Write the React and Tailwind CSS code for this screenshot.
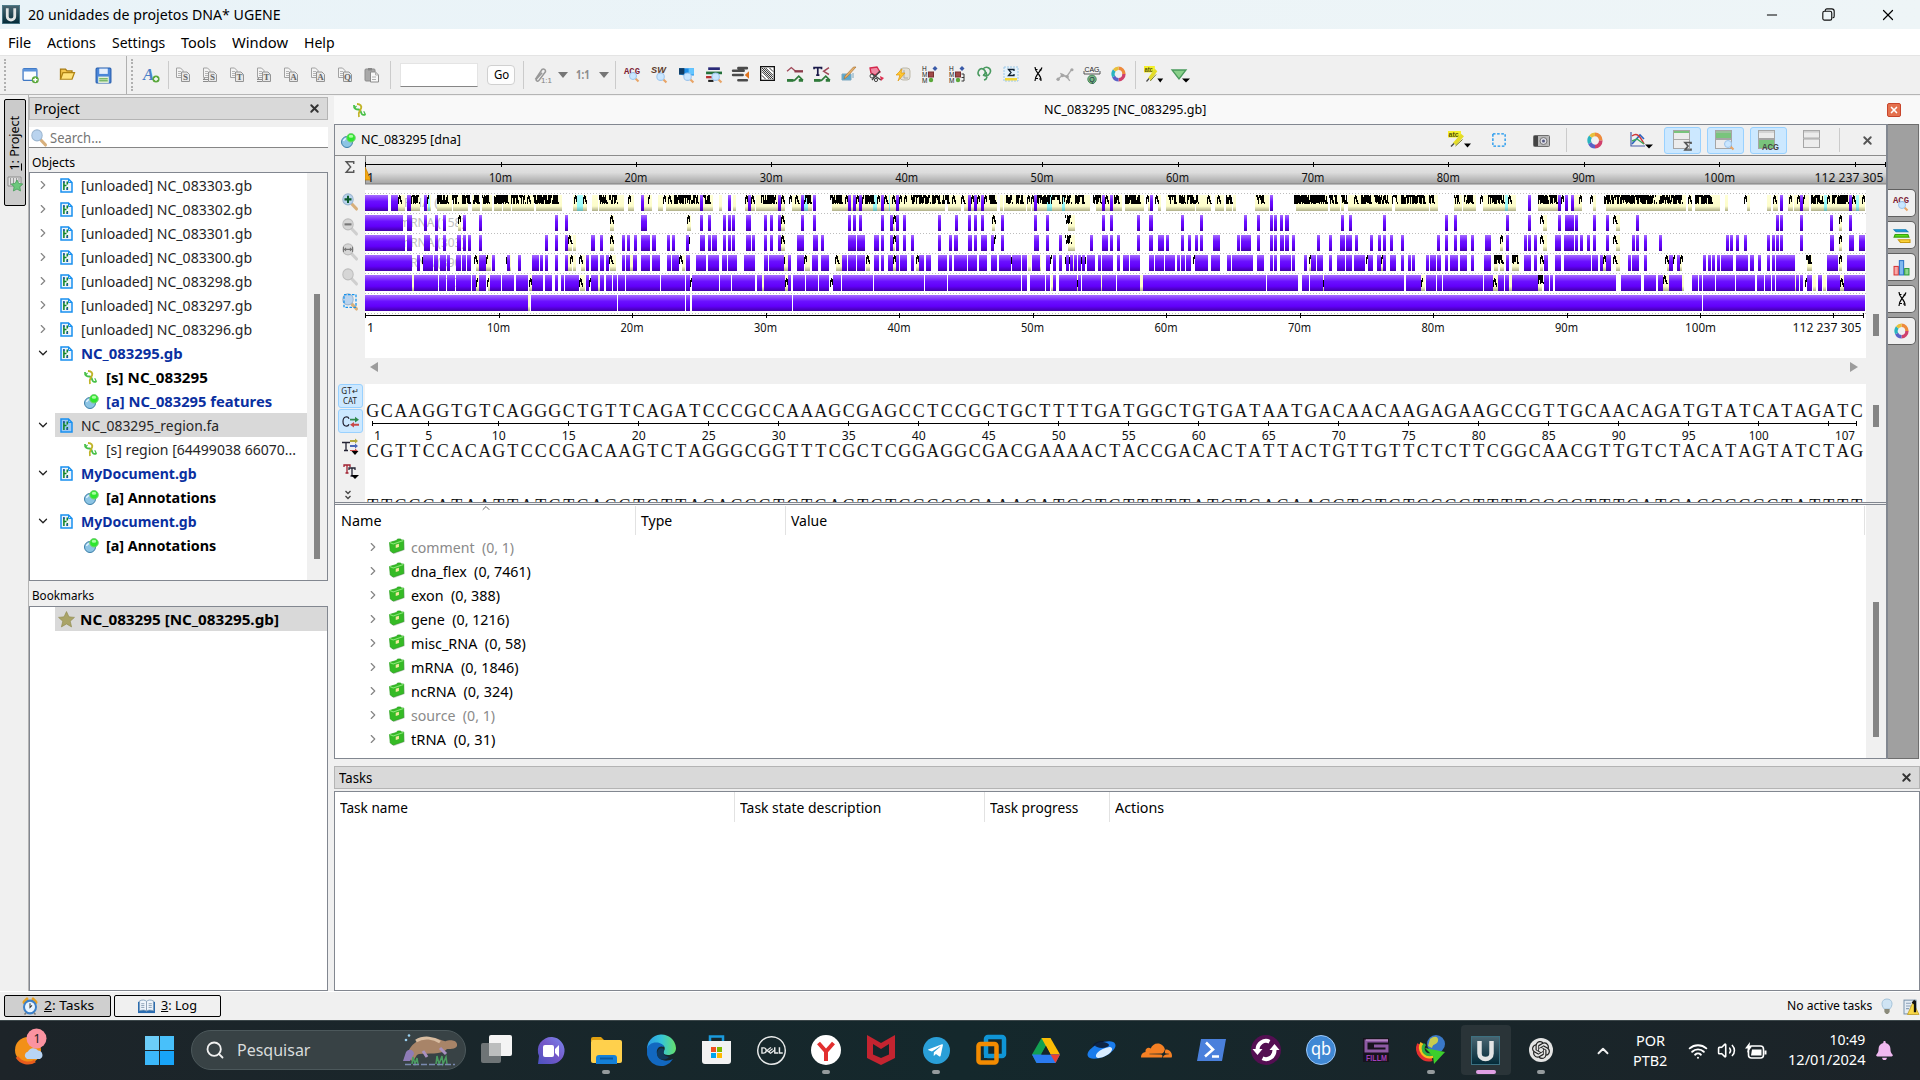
import React, { useLayoutEffect, useRef, useState } from "react";
import { X, Minus, ChevronRight, ChevronDown, ChevronUp, Wifi, Volume2, Search } from "lucide-react";
import { SiOpenai, SiCloudflare, SiDell } from "react-icons/si";
import { FaTelegramPlane, FaBell } from "react-icons/fa";

/* Text squeezed horizontally to a fixed advance width. */
function Fit({ w, className = "", children }) {
  const ref = useRef(null);
  const [s, setS] = useState(1);
  useLayoutEffect(() => {
    if (ref.current) setS(w / ref.current.offsetWidth);
  }, [w]);
  return (
    <span className={"block shrink-0 " + className} style={{ width: w }}>
      <span ref={ref} className="block w-max origin-left whitespace-pre" style={{ transform: `scaleX(${s})` }}>
        {children}
      </span>
    </span>
  );
}

const Svg = ({ w = 16, h = w, vb = "0 0 16 16", children, className = "" }) => (
  <svg width={w} height={h} viewBox={vb} className={"block shrink-0 overflow-visible " + className} fill="none" preserveAspectRatio="none">
    {children}
  </svg>
);

/* ---------- shared icons ---------- */
const Glass = ({ x = 7, y = 8 }) => (
  <g>
    <path d={`M${x + 5.5} ${y + 5.5}l3 3`} stroke="#e8a466" strokeWidth="2" />
    <circle cx={x + 3} cy={y + 3} r="3.500" fill="#c9e6ff" stroke="#9cc4ec" />
  </g>
);
const MagIcon = ({ kind }) => {
  const live = kind === "plus" || kind === "sel" || kind === "search";
  return (
    <Svg w={16} h={17}>
      <path d="M10 10.500l4.500 4.500" stroke={live ? "#d8b07c" : "#cfcfcf"} strokeWidth="3" strokeLinecap="round" />
      <circle cx="6" cy="6" r="5.200" fill={live ? "#b9d3ee" : "#d6d6d6"} stroke={live ? "#9bb5cf" : "#bcbcbc"} />
      {kind === "plus" && <path d="M6 2.500v7M2.500 6h7" stroke="#0b5a2c" strokeWidth="2" />}
      {kind === "minus" && <path d="M2.500 6h7" stroke="#777" strokeWidth="2" />}
      {kind === "range" && <path d="M1.500 3.500v5M10.500 3.500v5M1.500 6h9M4 4.500L2.500 6L4 7.500M8 4.500L9.500 6L8 7.500" stroke="#777" />}
      {kind === "sel" && <rect x="2" y="1.500" width="12" height="12" stroke="#1593ee" strokeWidth="1.300" strokeDasharray="2.500 1.500" />}
    </Svg>
  );
};
const DocIcon = ({ sel }) => (
  <Svg w={13} h={15} vb="0 0 13 15">
    <path d="M1 1h7.500l3.500 3.500V14H1z" fill={sel ? "#9cc8f4" : "#eef4fc"} stroke="#1890f0" strokeWidth="1.500" />
    <path d="M8.500 1v3.500H12" stroke="#1890f0" />
    <path d="M3.900 3.500V12M7.300 3.500v3M7.300 9v3M4 7.500h2.500" stroke="#14852a" strokeWidth="1.600" />
    <path d="M3.900 3v2M7.300 10v2" stroke="#1a50a8" strokeWidth="1.400" />
  </Svg>
);
const DnaIcon = () => (
  <Svg w={13} h={15} vb="0 0 13 15">
    <path d="M1 2c-.5 4 2.500 4.500 4.500 4.500S8 9 8.500 10.500s2.500 2 4 .5" stroke="#48c048" strokeWidth="1.800" />
    <path d="M4 1c3.500 0 5 2 4 4.500S4.500 9.500 6 14" stroke="#c0b428" strokeWidth="1.900" />
    <path d="M12.200 11l-1.500-2.800M1.500 5L3.500 3" stroke="#48c048" strokeWidth="1.200" />
  </Svg>
);
const AnnIcon = () => (
  <Svg w={15} h={15} vb="0 0 15 15">
    <circle cx="6" cy="9" r="5.500" fill="#8cc4e4" stroke="#3c7ea8" />
    <path d="M2.500 8a3.500 3.500 0 0 1 3-2.500" stroke="#e4f4ff" strokeWidth="1.500" />
    <circle cx="10" cy="4.800" r="4.300" fill="#2ee62e" stroke="#7ad07a" />
    <ellipse cx="10" cy="3.200" rx="2.300" ry="1.500" fill="#a8ffa0" />
  </Svg>
);
const Folder = () => (
  <Svg w={16} h={16} vb="0 0 15 16" className="-mt-[2px]">
    <path d="M2.500 6L14 3.500l.8 8.500L5 16 2.500 15z" fill="#9a9a9a" opacity=".45" />
    <path d="M.5 4.500l6.500-2L8 1h3l.5 1L13.800 2v9.500L4 15 1.200 13z" fill="#35bb25" stroke="#27a01c" strokeWidth=".7" />
    <path d="M.8 4.500L4 6l9.500-3.500" stroke="#8ce87a" strokeWidth="1" />
    <path d="M6.300 6.800l3-1v3.200l-3 1z" fill="#f3e9a0" />
  </Svg>
);
const Donut = ({ s = 15 }) => (
  <Svg w={s} h={s + 1}>
    <g strokeWidth="3.600">
      <path d="M8 2.200A5.800 5.800 0 0 1 13.800 8" stroke="#ee8a3c" />
      <path d="M13.800 8A5.800 5.800 0 0 1 8 13.800" stroke="#d0406c" />
      <path d="M8 13.800A5.800 5.800 0 0 1 2.800 10.500" stroke="#5a62c8" />
      <path d="M2.800 10.500A5.800 5.800 0 0 1 3.500 4.400" stroke="#2ab4c0" />
      <path d="M3.500 4.400A5.800 5.800 0 0 1 8 2.200" stroke="#e8c03c" />
    </g>
  </Svg>
);
const Marker = ({ w = 24 }) => (
  <Svg w={w} h={18} vb="0 0 24 18">
    <rect x="0" y="0" width="13" height="6.500" fill="#f4f02a" />
    <text x="0.500" y="5.500" fontSize="7" fontWeight="700" fontFamily="Liberation Sans, sans-serif" fill="#55550a">atc</text>
    <path d="M14.500 4L6.500 13" stroke="#e4dc28" strokeWidth="4" />
    <path d="M14.500 8.500L7.500 15" stroke="#75751a" />
    <path d="M3 15.500l3-3" stroke="#444" strokeWidth="1.500" />
    <path d="M16 12.500h7l-3.500 4z" fill="#000" />
  </Svg>
);
const AcgGlass = () => (
  <Svg w={17} h={17} vb="0 0 17 17">
    <text x="0" y="7.500" textLength="16" lengthAdjust="spacingAndGlyphs" fontSize="9" fontWeight="700" fontFamily="Liberation Mono, monospace" fill="#7d2236">ACG</text>
    <Glass x={6} y={7} />
  </Svg>
);
const Helix = () => (
  <Svg>
    <path d="M5 1c0 3 1 4 3 6.500S11.500 11 11 15M12 1.500C11 4 9.500 5.500 8 7.500S5 11 5 15" stroke="#000" strokeWidth="1.200" />
    <path d="M5.500 3.500h2M9.500 4h2M5.500 12.500h2.500M9 13h2.500" stroke="#000" strokeWidth="1.200" />
  </Svg>
);

/* ---------- toolbar ---------- */
const CopyIcon = ({ t, comp }) => (
  <Svg w={16}>
    <path d="M1.500 1h4l2.500 2.500v7H1.500z" fill="#f4f4f4" stroke="#a2a2a2" />
    <path d="M3 4.500h3M3 6.500h3M3 8.500h3" stroke="#b4b4b4" />
    <path d="M6.500 5h5.500l2.500 2.500V14.500h-8z" fill="#e8e8e8" stroke="#949494" />
    {comp && <path d="M1 12.500h5M1 12.500l2-1.500M1 14.500h5" stroke="#8c8c8c" />}
    <text x="10.500" y="13.300" textAnchor="middle" fontSize="9" fontWeight="700" fontFamily="Liberation Serif, serif" fill="#666">{t}</text>
  </Svg>
);
const Cell = ({ children, w = 27 }) => (
  <div className="flex h-full shrink-0 items-center justify-center" style={{ width: w }}>{children}</div>
);
const Sep = () => <div className="h-7 w-px shrink-0 bg-[#cbcbcb]" />;
const Grip = () => <div className="h-8 shrink-0 border-l-2 border-dotted border-[#b0b0b0]" />;

const toolIcons = [
  <AcgGlass />,
  <Svg w={17} h={17}>
    <text x="0" y="7" textLength="14" lengthAdjust="spacingAndGlyphs" fontSize="9" fontWeight="700" fontStyle="italic" fontFamily="Liberation Sans, sans-serif" fill="#5a3a2a">SW</text>
    <Glass x={6} y={7} />
  </Svg>,
  <Svg w={17} h={17}><path d="M1 2h14v7H6L1 8z" fill="#1c8ee8" /><path d="M1 2h5v6H1z" fill="#103c64" /><path d="M10 2h5v6h-5z" fill="#65c6ff" /><Glass x={6} y={7} /></Svg>,
  <Svg w={17} h={17}><path d="M3 2.500h11" stroke="#2a2a78" strokeWidth="2.500" /><path d="M1 6.500h15" stroke="#23703a" strokeWidth="2.500" /><path d="M1 10.500h6" stroke="#b83030" strokeWidth="2.200" /><path d="M3 14h5" stroke="#222" strokeWidth="2" /><Glass x={7} y={7} /></Svg>,
  <Svg w={17}><path d="M6 2h8M1 4.500h10M1 8.500h9M6 13.500h8" stroke="#4a4a4a" strokeWidth="2.400" strokeLinecap="round" /><path d="M16 5v7l-4-3.500z" fill="#e0731c" /></Svg>,
  <Svg w={15} h={15}><rect x=".7" y=".7" width="14.600" height="14.600" fill="#fff" stroke="#111" strokeWidth="1.400" /><path d="M2 2l12 12M6 2l8 8M2 6l8 8M10 2l4 4M2 10l4 4M4 2l10 10M2 4l10 10" stroke="#222" strokeWidth="1" /></Svg>,
  <Svg w={17}><path d="M1 5l4-3.500L9 5" stroke="#a04858" strokeWidth="1.300" /><path d="M8 5h8" stroke="#8b3a4a" strokeWidth="2.200" /><path d="M1 13.500h7l4-4 4 4" stroke="#2f7a3a" strokeWidth="1.500" /><path d="M1 13.500h6M12 13.500h4" stroke="#2f7a3a" strokeWidth="2.500" /></Svg>,
  <Svg w={17}><path d="M1 3V1.500h7V3M4.500 1.500v7M3 8.500h3" stroke="#1a1a4a" strokeWidth="1.600" /><path d="M15 1.500L10 5l5 3" stroke="#a04858" strokeWidth="1.400" /><path d="M1 13.500h7l4-4 4 4" stroke="#2f7a3a" strokeWidth="1.500" /><path d="M1 13.500h6M12 13.500h4" stroke="#2f7a3a" strokeWidth="2.500" /></Svg>,
  <Svg w={16}><path d="M1 8h9v6H1zM12 7v5" fill="#58a8d0" stroke="#7aa8c0" /><path d="M15 1L6 11l-3 2 1-3L12.500 1z" fill="#e8b068" stroke="#a8763a" strokeWidth=".7" /></Svg>,
  <Svg w={16}><path d="M2 2l7-1 3 5-5 3-4-2z" fill="#f08aa4" stroke="#d4284c" strokeWidth="1.300" /><path d="M4 8l9 6M12 5l-8 9" stroke="#444" strokeWidth="1.300" /><circle cx="4" cy="10" r="2" stroke="#444" /><circle cx="8" cy="14" r="1.600" stroke="#444" /><path d="M12 10l4 2-3 3z" fill="#e03050" /></Svg>,
  <Svg w={16}><rect x="5" y="2" width="10" height="12" rx="3" fill="#e2e0d8" stroke="#bdb9aa" /><path d="M9 4v8h4" stroke="#aaa" /><path d="M7 3L1 9h4l-2 6 7-8H6z" fill="#ffc830" stroke="#e09a10" strokeWidth=".7" /></Svg>,
  ...[0, 1].map((k) => (
    <Svg w={16} h={17} vb="0 0 16 17" key={k}>
      <text fontSize="6.500" fontFamily="Liberation Sans, sans-serif" fill="#222"><tspan x="0" y="5">H</tspan><tspan x="0" y="11">M</tspan><tspan x="0" y="16.500">M</tspan></text>
      <rect x="6.500" y="6" width="5" height="5" fill="#a04a48" stroke="#7a3030" />
      <path d="M13 0l2.500 2.500L13 5l-2.500-2.500z" fill="#3a5aa8" />
      <circle cx="9" cy="14" r="2.200" fill="#5aa83a" />
      {k === 1 && <path d="M12.500 8h2.500v7h-2.500M12.500 11.500h2.500" stroke="#333" />}
    </Svg>
  )),
  <Svg w={16}><path d="M4 10C0 8 3 1 7 3s2 6 0 6M7 3c4-4 9 0 7 4s-6 3-7 2M8 14c4-1 3-4 2-8" stroke="#4a9a60" strokeWidth="1.600" /></Svg>,
  <Svg w={16}><rect x="1" y="1" width="14" height="14" fill="#e4f2fb" stroke="#9cc8e8" strokeDasharray="2 1" /><rect x="2" y="12" width="12" height="2.500" fill="#f4d838" /><path d="M11 5V3.500H5.500L8 6.500 5.500 9.500H11V8" stroke="#123" strokeWidth="1.300" /></Svg>,
  <Helix />,
  <Svg w={17}><path d="M1 13l5-4 4 1 5-7M4 7l6 3 3 4" stroke="#ababab" strokeWidth="1.300" /><circle cx="2" cy="12.500" r="1.600" fill="#a5a5a5" /><circle cx="6" cy="9" r="1.600" fill="#a5a5a5" /><circle cx="10.500" cy="10" r="1.600" fill="#a5a5a5" /><circle cx="15" cy="3.500" r="1.500" fill="#a5a5a5" /></Svg>,
  <Svg w={18} h={18} vb="0 0 18 18"><text x="1.500" y="5.800" textLength="15" lengthAdjust="spacingAndGlyphs" fontSize="7" fontFamily="Liberation Sans, sans-serif" fill="#222">CAG</text><path d="M1 5v3h16V5" stroke="#555" /><circle cx="9" cy="13.300" r="4.200" fill="#7ab68a" stroke="#4a8a5c" /><text x="9" y="16" textAnchor="middle" fontSize="7" fontFamily="Liberation Sans, sans-serif" fill="#123">Q</text></Svg>,
  <Donut s={15} />,
];

function Toolbar() {
  return (
    <div className="flex h-10 shrink-0 items-center border-t border-b border-t-[#e4e4e4] border-b-[#b5b5b5] bg-[#f0f0f0]">
      <div className="ml-1 flex items-center"><Grip /></div>
      <div className="ml-[6px] flex">
        <Cell w={36}><Svg w={17}><rect x="1" y="1.500" width="13" height="11" rx="1" fill="#fbfdff" stroke="#3f78c4" strokeWidth="1.200" /><path d="M1 3h13" stroke="#5c94dc" strokeWidth="2.500" /><circle cx="12.500" cy="12" r="3.300" fill="#5aa83c" /><path d="M12.500 10v4M10.500 12h4" stroke="#fff" strokeWidth="1.300" /></Svg></Cell>
        <Cell w={37}><Svg w={16} h={14}><path d="M1.500 14V2.500h5l1.500 2h5V7" fill="#f4c64c" stroke="#a87a10" strokeWidth="1.300" /><path d="M1.500 14L4 6.500h11.500L13 14z" fill="#ffe27a" stroke="#b08414" strokeWidth="1.300" /></Svg></Cell>
        <Cell w={37}><Svg w={17}><rect x="1" y="1" width="14" height="14" rx="1" fill="#4a86d8" stroke="#245cac" /><rect x="4" y="1.500" width="8" height="5" fill="#e4eefc" /><rect x="3" y="9" width="10" height="6" fill="#e4f0d8" /><path d="M4 11h8M4 13h8" stroke="#7ab86a" strokeWidth="1.300" /></Svg></Cell>
      </div>
      <div className="ml-[4px] h-full w-px bg-[#b0b0b0]" />
      <div className="ml-1 flex"><Grip /></div>
      <div className="ml-[3px] flex">
        <Cell w={32}><Svg w={16}><text x="-1" y="13" fontSize="17" fontStyle="italic" fontWeight="700" fontFamily="Liberation Serif, serif" fill="#4a80c8">A</text><circle cx="12" cy="12" r="3.600" fill="#5aa83c" /><path d="M12 10v4M10 12h4" stroke="#fff" strokeWidth="1.300" /></Svg></Cell>
      </div>
      <Sep />
      <div className="flex">
        {["S", "S", "T", "T", "A", "A", "Q"].map((t, i) => <Cell key={i}><CopyIcon t={t} comp={i === 1 || i === 3} /></Cell>)}
        <Cell><Svg w={16}><rect x="1" y="2" width="10" height="12" rx="1" fill="#a8a8a8" stroke="#8c8c8c" /><rect x="4" y="1" width="4" height="2.500" fill="#888" /><path d="M6.500 5h5l3 3v7h-8z" fill="#f8f8f8" stroke="#8c8c8c" /><path d="M11.500 5v3h3M8 10h4M8 12.500h4" stroke="#b0b0b0" /></Svg></Cell>
      </div>
      <div className="ml-[5px]"><Sep /></div>
      <div className="ml-[9px] h-[24px] w-[78px] border border-[#e4e4e4] border-b-[#868686] bg-white" />
      <div className="ml-[9px] flex h-[20px] w-[28px] items-center justify-center rounded border border-[#d0d0d0] bg-[#fdfdfd] text-[13px]"><Fit w={15}>Go</Fit></div>
      <div className="ml-[8px]"><Sep /></div>
      <div className="ml-[8px] flex items-center">
        <Svg w={18}><path d="M3 12L9 3a2 2 0 0 1 3 2L6 13a1.200 1.200 0 0 1-2-1.500L9 6" stroke="#989898" strokeWidth="1.400" /><text x="8" y="15.500" fontSize="7" fontFamily="Liberation Sans, sans-serif" fill="#808080">1:1</text></Svg>
      </div>
      <div className="ml-[8px] border-x-[5px] border-t-[6px] border-x-transparent border-t-[#767676]" />
      <div className="ml-[8px] text-[13px] font-bold text-[#8c8c8c]"><Fit w={14}>1:1</Fit></div>
      <div className="ml-[9px] border-x-[5px] border-t-[6px] border-x-transparent border-t-[#767676]" />
      <div className="ml-[6px]"><Sep /></div>
      <div className="ml-[3px] flex">{toolIcons.map((ic, i) => <Cell key={i}>{ic}</Cell>)}</div>
      <div className="ml-[3px]"><Sep /></div>
      <div className="ml-[8px] flex items-center gap-[7px]">
        <Marker w={20} />
        <Svg w={19} h={15} vb="0 0 19 15"><path d="M1 2h14l-7 9z" fill="#8ad08a" stroke="#4a9a5c" strokeWidth="1.300" /><path d="M11 10.500h8l-4 4z" fill="#000" /></Svg>
      </div>
    </div>
  );
}

/* ---------- project dock ---------- */
const tree = [
  ...["303", "302", "301", "300", "298", "297", "296"].map((n) => ({ k: "doc", c: false, t: `[unloaded] NC_083${n}.gb`, w: 171 })),
  { k: "doc", c: true, t: "NC_083295.gb", w: 102, b: true, blue: true },
  { k: "dna", t: "[s] NC_083295", w: 102, b: true },
  { k: "ann", t: "[a] NC_083295 features", w: 166, b: true, blue: true },
  { k: "doc", c: true, t: "NC_083295_region.fa", w: 138, sel: true },
  { k: "dna", t: "[s] region [64499038 66070...", w: 190 },
  { k: "doc", c: true, t: "MyDocument.gb", w: 116, b: true, blue: true },
  { k: "ann", t: "[a] Annotations", w: 110, b: true },
  { k: "doc", c: true, t: "MyDocument.gb", w: 116, b: true, blue: true },
  { k: "ann", t: "[a] Annotations", w: 110, b: true },
];

function DockTitle({ t, w }) {
  return (
    <div className="flex h-[23px] items-center justify-between border border-[#b4b4b4] bg-[#d9d9d9] pl-1 pr-[6px] text-[14px]">
      <Fit w={w}>{t}</Fit>
      <X size={13} strokeWidth={3.500} color="#333" />
    </div>
  );
}

function Project() {
  return (
    <div className="flex w-[300px] shrink-0 flex-col border-l border-[#b4b4b4]">
      <div className="mt-[2px]"><DockTitle t="Project" w={46} /></div>
      <div className="mt-[7px] flex h-[21px] items-center border-b border-[#868686] bg-white pl-[2px] text-[14px] text-[#757575]">
        <MagIcon kind="search" /><Fit w={52} className="ml-[3px]">Search...</Fit>
      </div>
      <div className="mt-[5px] flex h-[19px] items-center pl-[3px] text-[13px]"><Fit w={43}>Objects</Fit></div>
      <div className="flex h-[409px] border border-[#828790] bg-white">
        <div className="flex-1">
          {tree.map((r, i) => (
            <div key={i} className="flex h-[24px] items-center text-[15px]">
              <div className="flex w-[25px] justify-center">
                {r.c === true && <ChevronDown size={14} strokeWidth={2.200} color="#222" />}
                {r.c === false && <ChevronRight size={14} strokeWidth={2} color="#858585" />}
              </div>
              <div className={"flex h-full w-[252px] items-center " + (r.k === "doc" ? "pl-[5px] " : "pl-[29px] ") + (r.sel ? "bg-[#d9d9d9]" : "")}>
                <div className={r.k === "doc" ? "w-[21px]" : "w-[22px]"}>
                  {r.k === "doc" ? <DocIcon sel={r.sel} /> : r.k === "dna" ? <DnaIcon /> : <AnnIcon />}
                </div>
                <Fit w={r.w} className={(r.b ? "font-bold " : "") + (r.blue ? "text-[#0a2fa0]" : r.b ? "text-black" : "text-[#262626]")}>{r.t}</Fit>
              </div>
            </div>
          ))}
        </div>
        <div className="flex w-5 justify-center bg-[#f0f0f0] pt-[121px]"><div className="h-[265px] w-[6px] bg-[#858585]" /></div>
      </div>
      <div className="mt-[5px] flex h-[20px] items-center pl-[3px] text-[13px]"><Fit w={62}>Bookmarks</Fit></div>
      <div className="flex-1 border border-[#828790] bg-white pl-[25px]">
        <div className="flex h-[24px] items-center bg-[#d9d9d9] pl-[3px] text-[15px] font-bold">
          <Svg w={17}><path d="M8 .5l2.300 5 5.200.5-4 3.600 1.300 5.400L8 12.200 3.200 15l1.300-5.400-4-3.600 5.200-.5z" fill="#aaa468" stroke="#8f8a50" strokeWidth=".6" /></Svg>
          <Fit w={199} className="ml-[5px]">NC_083295 [NC_083295.gb]</Fit>
        </div>
      </div>
    </div>
  );
}

/* ---------- annotation overview ---------- */
/* Tiles hold feature spans on their own horizontal scale; o is the origin and s the scale. */
const tiles = [
  { o: 330, s: 2.9037, rows: [
    { p: "102-168 177-197 224-235 273-282 903-912 1074-1083 1156-1164 1214-1222 1301-1310 1368-1376 1402-1411 1504-1513 1519-1527 1537-1546",
      c: "197-218 235-262 282-293 311-354 357-401 412-436 441-470 476-499 502-527 529-580 582-592 597-674 706-746 761-778 781-854 865-883 912-935 952-967 975-1111 1130-1138 1170-1179 1205-1235 1237-1321 1342-1400 1458-1504 1513-1568",
      y: "284-290 717-735 1376-1388",
      k: "197-210 235-262 282-288 311-345 354-376 382-410 415-437 441-465 476-520 527-568 573-585 588-665 709-718 735-747 781-807 811-837 865-874 923-928 967-977 982-992 998-1072 1084-1105 1205-1214 1222-1235 1252-1298 1310-1321 1334-1342 1349-1364 1376-1400 1452-1490 1495-1504 1527-1537 1546-1568" },
    { p: "102-212 224-238 273-282 305-314 328-337 386-395 433-441 653-662 682-691 903-920 1074-1083 1098-1106 1141-1150 1156-1164 1167-1176 1208-1222 1260-1269 1278-1286 1301-1310 1368-1376 1402-1411 1504-1513 1519-1527 1537-1546",
      c: "372-381 813-825 1037-1048 1310-1321", k: "372-381 813-825 1037-1046 1310-1321" },
    { p: "102-218 224-238 273-290 305-314 328-337 369-380 386-395 401-409 433-441 624-633 653-662 682-691 758-769 784-793 848-857 862-871 883-891 903-929 935-947 979-987 993-1002 1034-1041 1074-1089 1098-1106 1109-1124 1141-1150 1156-1164 1167-1176 1208-1222 1225-1234 1260-1269 1278-1286 1301-1310 1356-1376 1402-1417 1426-1434 1504-1527 1530-1553",
      c: "691-703 706-714 813-825 1310-1321", k: "692-707 813-825 1041-1046 1310-1321" },
    { p: "102-238 253-261 270-299 302-314 319-337 340-348 366-381 384-395 398-409 433-454 470-479 514-523 546-554 587-607 610-619 624-633 653-662 682-691 743-752 758-778 784-796 801-810 848-857 859-871 880-891 903-929 935-958 979-990 993-1014 1034-1045 1063-1092 1098-1130 1138-1153 1156-1182 1202-1234 1260-1272 1274-1318 1330-1339 1356-1376 1400-1417 1426-1449 1487-1501 1504-1527 1530-1553",
      c: "424-433 454-467 523-527 691-703 706-714 729-740 813-830 871-880 1022-1031 1318-1330 1380-1394 1470-1487 1556-1568", k: "266-270 418-429 453-458 512-515 697-707 723-734 810-825 1014-1024 1318-1322 1376-1386 1467-1482 1556-1568" },
    { p: "102-238 244-314 317-337 340-363 366-409 412-424 433-453 464-497 499-534 540-575 587-618 624-644 653-662 671-679 682-723 743-752 758-778 784-796 801-819 822-833 836-857 859-958 961-1031 1034-1045 1051-1130 1132-1164 1167-1234 1240-1254 1260-1321 1330-1339 1344-1380 1382-1417 1420-1449 1461-1484 1487-1568",
      c: "238-244 424-433 458-464 578-587 725-740 778-784 1254-1260 1321-1330", k: "424-430 455-461 577-587 724-735 753-758 1045-1050 1321-1330 1452-1461" },
    { p: "102-575 584-833 836-1031 1034-1045 1051-1342 1344-1568", c: "575-582" } ] },
  { o: 860, s: 2.9037, rows: [
    { p: "0-6 61-70 105-113 314-322 331-340 351-360 505-514 703-711 726-735 842-851 1191-1199",
      c: "6-247 256-293 302-398 407-415 418-482 485-497 499-668 685-760 769-825 836-842 865-874 889-973 976-1019 1031-1057 1063-1080 1083-1092 1147-1188 1266-1359 1365-1394 1397-1405 1417-1545 1553-1568",
      y: "38-49 84-87 543-558 587-595",
      k: "6-12 15-44 49-58 70-84 93-105 113-122 128-137 148-207 209-236 239-262 267-280 293-308 322-331 340-348 360-369 375-398 424-444 453-476 485-493 497-505 514-583 587-615 624-653 677-703 711-724 737-755 769-817 830-840 857-867 894-921 926-947 950-983 1008-1022 1037-1048 1063-1083 1150-1176 1260-1359 1362-1388 1397-1417 1434-1450 1455-1488 1492-1537 1545-1565" },
    { p: "0-6 61-70 87-96 105-113 125-134 226-235 276-285 314-322 331-340 351-360 409-418 505-514 540-549 703-711 726-735 804-813 839-851 932-941 987-996 1115-1124 1153-1161 1191-1199 1202-1211 1220-1228 1234-1246 1397-1405 1420-1429 1519-1527",
      c: "96-102 383-392 604-624", k: "96-104 383-394 595-615" },
    { p: "0-15 41-55 61-70 87-96 105-113 125-134 148-157 226-235 258-267 273-285 314-325 331-340 351-369 380-389 409-418 505-520 540-549 578-587 668-677 703-720 726-735 746-755 804-813 839-851 865-883 889-897 932-941 952-961 973-981 987-996 1025-1045 1095-1103 1106-1135 1153-1161 1191-1199 1202-1211 1220-1231 1234-1246 1254-1263 1327-1336 1362-1371 1394-1408 1411-1429 1437-1446 1481-1490 1504-1513 1519-1527 1539-1548",
      c: "96-102 604-624", k: "96-104 388-394 595-615" },
    { p: "0-15 41-55 61-70 81-96 105-113 116-136 148-157 171-186 192-206 226-253 258-267 273-311 314-340 346-369 380-398 404-438 441-467 470-485 499-523 540-552 560-569 578-587 598-607 610-618 621-630 633-642 645-653 659-682 691-700 703-735 746-755 764-781 784-813 839-854 857-883 886-915 920-929 932-944 947-961 973-1010 1019-1045 1066-1077 1080-1141 1153-1173 1191-1199 1202-1211 1220-1251 1254-1263 1289-1298 1310-1324 1327-1344 1362-1371 1385-1408 1411-1429 1434-1466 1475-1490 1501-1513 1519-1527 1539-1556",
      c: "17-29 96-105 163-171 487-497 523-526 618-621 1304-1310 1513-1519", k: "17-29 96-104 163-171 438-441 552-557 595-598 607-610 642-645 653-655 967-973 1304-1310 1469-1475 1513-1519" },
    { p: "0-38 41-186 189-253 256-467 470-485 494-537 540-552 560-569 578-630 633-642 645-700 703-743 746-813 822-1179 1182-1272 1283-1304 1307-1344 1347-1568",
      c: "555-560 630-633 700-703 813-822 1344-1347", k: "630-633 1344-1347" },
    { p: "0-1568" } ] },
  { o: 1390, s: 2.9585, rows: [
    { p: "408-417 497-506 518-527 535-544 1154-1163 1213-1222 1358-1367",
      c: "0-5 15-115 118-142 189-213 216-254 275-372 438-497 544-568 601-609 639-875 881-893 902-976 991-1000 1057-1065 1115-1127 1133-1148 1177-1192 1195-1240 1246-1405",
      y: "340-349 1284-1293 1379-1388",
      k: "5-25 32-107 115-133 189-206 219-249 266-275 290-340 349-361 438-497 506-515 558-568 592-602 633-790 795-868 882-892 902-956 1047-1057 1133-1145 1180-1189 1204-1213 1222-1227 1246-1284 1293-1303 1308-1358 1367-1380 1395-1405" },
    { p: "163-172 189-198 343-352 408-417 497-506 518-544 547-556 601-609 639-648 728-737 1142-1151 1154-1163 1213-1222 1302-1311 1358-1367", c: "453-464 669-680 1328-1337", k: "444-457 660-674 1328-1337" },
    { p: "0-9 33-41 139-148 163-172 189-198 207-228 240-249 281-299 343-352 396-405 408-417 426-435 488-506 515-544 547-556 562-571 583-592 601-609 639-648 716-725 728-737 751-760 796-805 994-1003 1006-1015 1024-1033 1047-1056 1115-1124 1130-1139 1142-1151 1154-1163 1213-1222 1302-1314 1358-1373 1388-1405",
      c: "325-334 453-464 669-680 1328-1337", k: "325-334 444-457 660-674 1328-1337" },
    { p: "0-18 33-41 53-62 65-74 107-115 118-136 139-151 163-172 177-201 207-228 240-249 278-299 343-352 396-417 426-435 456-467 488-506 515-595 598-615 621-630 639-654 704-713 716-737 751-760 825-837 849-858 926-935 941-950 953-962 967-976 979-1015 1024-1059 1065-1077 1089-1098 1115-1124 1130-1139 1142-1197 1293-1325 1352-1405",
      c: "308-320 325-337 361-381 444-453 630-639 669-680 820-825 849-863 1234-1248 1328-1337", k: "308-336 361-381 444-456 630-639 660-674 814-825 837-843 858-866 1231-1248 1328-1337" },
    { p: "0-41 47-92 107-136 139-154 157-275 278-305 320-337 340-352 361-438 456-470 473-482 488-669 683-743 751-787 793-808 825-864 893-911 914-923 926-962 964-1021 1024-1080 1086-1106 1109-1127 1130-1139 1142-1198 1201-1210 1213-1222 1234-1248 1266-1278 1293-1331 1343-1405",
      c: "92-104 305-320 352-361 438-450 808-825 864-870 1198-1201 1251-1260 1281-1290 1331-1343", k: "92-97 305-318 438-456 808-822 1229-1234 1331-1343" },
    { p: "0-923 926-1405" } ] },
];

const spans = (str, t) => (str ? str.split(" ").map((q) => q.split("-").map((v) => Math.round(+v / t.s + t.o) - 365)) : []);

/* Dense arrow heads: a dark band whose edges are broken by slivers; narrow ones show a single head. */
function Teeth({ a, b, y }) {
  let d = "";
  const n = b - a;
  for (let x = a; x < b; x++) {
    const f = Math.sin(x * 12.9898) * 43758.5453;
    const r = Math.floor((f - Math.floor(f)) * 16);
    let top = [0, 0, 0, 0, 1, 0, 2, 0, 0, 0, 0, 5, 0, 0, 0, 0][r];
    let bot = [9, 8, 9, 7, 9, 5, 9, 9, 2, 9, 8, 9, 8, 9, 3, 9][r];
    if (n < 6) {
      const k = x - a;
      top = [2, 0, 1, 5, 8][k];
      bot = [9, 4, 7, 9, 9][k];
    } else if (x === b - 1) {
      top = 7;
      bot = 9;
    }
    if (bot > top) d += `M${x} ${y + top}h1v${bot - top}h-1z`;
  }
  return <path d={d} fill="#000" />;
}

const marks = ["10m", "20m", "30m", "40m", "50m", "60m", "70m", "80m", "90m", "100m"];
function Marks({ first, step, last, end, y, ty }) {
  return (
    <g fontFamily="Noto Sans, sans-serif" fontSize="12.500" fill="#111">
      <path d={`M.5 ${y - 2.5}v5M${end} ${y - 2.5}v5M0 ${y}H${end}M${last} ${y - 2.5}v5` + marks.map((m, i) => `M${Math.round(first + i * step) + 0.5} ${y - 2.5}v5`).join("")} stroke="#000" strokeWidth="1" shapeRendering="crispEdges" />
      <text x="2" y={ty}>1</text>
      {marks.map((m, i) => (
        <text key={m} x={first + i * step - (i === 9 ? 15 : 11.5)} y={ty} textLength={i === 9 ? 31 : 23} lengthAdjust="spacingAndGlyphs">{m}</text>
      ))}
      <text x={end - 71} y={ty} textLength="69" lengthAdjust="spacingAndGlyphs">112 237 305</text>
    </g>
  );
}

function Overview() {
  return (
    <svg width="1501" height="168" className="block bg-white" shapeRendering="crispEdges">
      <defs>
        <linearGradient id="pu" x2="0" y2="1"><stop offset="0" stopColor="#a66cff" /><stop offset=".4" stopColor="#6a10ff" /><stop offset=".7" stopColor="#6200fa" /><stop offset="1" stopColor="#4200a8" /></linearGradient>
        <linearGradient id="cr" x2="0" y2="1"><stop offset="0" stopColor="#ffffd6" /><stop offset=".7" stopColor="#fdfdca" /><stop offset="1" stopColor="#aeae88" /></linearGradient>
        <linearGradient id="cy" x2="0" y2="1"><stop offset="0" stopColor="#b0ffff" /><stop offset=".7" stopColor="#96fafa" /><stop offset="1" stopColor="#68b4b4" /></linearGradient>
      </defs>
      <g fontFamily="Noto Sans, sans-serif" fontSize="13" fill="#c0c0c0">
        {["tRNA (218)", "mRNA (158)", "mRNA (303)", "mRNA (390)", "mRNA (77)"].map((t, i) => <text key={t} x="34" y={17 + i * 20} textLength="66" lengthAdjust="spacingAndGlyphs">{t}</text>)}
      </g>
      {[0, 1, 2, 3, 4, 5, 6].map((i) => <path key={i} d={`M0 ${3.5 + 20 * i}H1501`} stroke="#bdbdbd" strokeDasharray="1 2" />)}
      {tiles.map((t) => t.rows.map((r, i) => {
        const y = 5 + 20 * i;
        const box = (s, f) => spans(s, t).map(([a, b]) => <rect key={f + a} x={a} y={y} width={Math.max(1, b - a)} height="16" fill={f} />);
        return (
          <g key={t.o + "-" + i}>
            {box(r.c, "url(#cr)")}{box(r.y, "url(#cy)")}
            {spans(r.k, t).map(([a, b]) => <Teeth key={a} a={a} b={Math.max(b, a + 1)} y={y + (i === 4 && b - a < 5 ? 3 : 0)} />)}
            {box(r.p, "url(#pu)")}
          </g>
        );
      }))}
      <Marks first={133.500} step={133.500} last={1468.500} end={1498.500} y={125.500} ty={142} />
    </svg>
  );
}

/* ---------- nucleotide rows ---------- */
const seq = "GCAAGGTGTCAGGGCTGTTCAGATCCCGCCAAAGCGAGCCTCCGCTGCTTTTGATGGCTGTGATAATGACAACAAGAGAAGCCGTTGCAACAGATGTATCATAGATC";
const comp = seq.split("").map((c) => ({ A: "T", T: "A", G: "C", C: "G" })[c]).join("");
const next = "TTGGGATAATTATGTGAGGTGTTAGAGGGTGTGAGTGTGGGGGGAAAGATGGTGTTTTTATGTGAGAAGGTGTGTGGGGTTTTGGGGTTTGATGAGGGGGGTATTTT";
const xs = seq.split("").map((_, i) => 7.8 + 14 * i).join(" ");
function Sequence() {
  const n = Array.from({ length: 20 }, (_, i) => (i + 1) * 5);
  return (
    <svg width="1501" height="118" className="block bg-white">
      <g fontFamily="Liberation Serif, serif" fontSize="18" textAnchor="middle" fill="#161616">
        <text x={xs} y="33">{seq}</text>
        <text x={xs} y="73">{comp}</text>
        <text x={xs} y="127.500">{next}</text>
      </g>
      <path shapeRendering="crispEdges" d={"M7 39.500H1492M7.500 37v5M1491.500 37v5" + [...n, 105].map((i) => `M${Math.round(-6.6 + 14 * i)}.5 37v5`).join("")} stroke="#000" />
      <g fontFamily="Noto Sans, sans-serif" fontSize="12.500" textAnchor="middle" fill="#111">
        <text x="12.500" y="55.500">1</text>
        {n.map((i) => <text key={i} x={-6.3 + 14 * i} y="55.500" textLength={i < 10 ? 7 : i < 100 ? 14 : 20} lengthAdjust="spacingAndGlyphs">{i}</text>)}
        <text x="1480" y="55.500" textLength="20" lengthAdjust="spacingAndGlyphs">107</text>
      </g>
    </svg>
  );
}

const PanelIcon = ({ a, b }) => (
  <g>
    <rect x="0.500" y="0.500" width="16" height="8" fill={a ? "#79c47c" : "#ececec"} stroke="#a5a5a5" />
    <path d="M1 2h15" stroke="#bcbcbc" />
    <rect x="0.500" y="9.500" width="16" height="9" fill={b ? "#79c47c" : "#ececec"} stroke="#a5a5a5" />
  </g>
);
const Toggle = ({ children }) => (
  <div className="flex h-[27px] w-[37px] items-center justify-center rounded-[3px] border border-[#99d1ff] bg-[#cce8ff]">{children}</div>
);

function SeqHeader() {
  return (
    <div className="flex h-[31px] items-center border-b border-[#8c8c8c] pl-[6px] text-[13px]">
      <AnnIcon /><Fit w={100} className="ml-[5px]">NC_083295 [dna]</Fit>
      <div className="ml-[987px] flex items-center">
        <Marker />
        <Svg w={14} className="ml-[20px]"><rect x="1" y="1" width="14" height="14" stroke="#1593ee" strokeWidth="1.500" strokeDasharray="3 1.800" /></Svg>
        <Svg w={17} h={13} vb="0 0 17 13" className="ml-[27px]"><rect x=".5" y="1.500" width="16" height="11" rx="1" fill="#b8b8b8" stroke="#6e6e6e" /><rect x="1" y="2" width="4" height="10" fill="#444" /><circle cx="10.500" cy="7" r="3.500" fill="#dcdce4" stroke="#777" /><circle cx="10.500" cy="7" r="1.500" fill="#555a80" /></Svg>
        <div className="ml-[16px] h-[24px] w-px bg-[#cbcbcb]" />
        <div className="ml-[20px]"><Donut s={16} /></div>
        <Svg w={23} h={17} vb="0 0 23 17" className="ml-[27px]"><path d="M1 0v14h14" stroke="#4a5ea8" strokeWidth="1.200" /><path d="M2 12L10 3l4 4" stroke="#2a62c0" strokeWidth="1.600" /><path d="M2 4c5-4 8 0 12 8" stroke="#d03838" strokeWidth="1.600" /><path d="M2 9l5-2 7 5" stroke="#3ca85c" strokeWidth="1.500" /><path d="M15 12.500h8l-4 4z" fill="#000" /></Svg>
        <div className="ml-[11px] flex gap-[6px]">
          <Toggle><Svg w={21} h={21} vb="0 0 21 21"><g><rect x="1.500" y=".5" width="16" height="18" fill="#ececec" stroke="#a5a5a5" /><rect x="2" y="1" width="15" height="2" fill="#79c47c" /><path d="M2 9.500h15" stroke="#aaa" /></g><path d="M19 14v-1.500h-6l3 3.500-3 4h6v-1.500" stroke="#555" strokeWidth="1.700" /></Svg></Toggle>
          <Toggle><Svg w={21} h={21} vb="0 0 21 21"><PanelIcon a /><g transform="translate(5 5)"><Glass x={5} y={6} /></g></Svg></Toggle>
          <Toggle><Svg w={21} h={21} vb="0 0 21 21"><PanelIcon b /><text x="4" y="20" textLength="17" lengthAdjust="spacingAndGlyphs" fontSize="8.500" fontWeight="700" fontFamily="Liberation Sans, sans-serif" fill="#444">ACG</text></Svg></Toggle>
        </div>
        <Svg w={17} h={18} vb="0 0 17 19" className="mb-[2px] ml-[16px]"><PanelIcon /></Svg>
        <div className="ml-[19px] h-[24px] w-px bg-[#cbcbcb]" />
        <X size={13} strokeWidth={3.500} color="#555" className="ml-[21px]" />
      </div>
    </div>
  );
}

const SideTab = ({ children }) => (
  <div className="flex h-[28px] w-[28px] items-center justify-center rounded-r-[5px] border border-l-0 border-[#606060] bg-[#f0f0f0]">{children}</div>
);

const VThumb = ({ h, pt }) => (
  <div className="flex w-5 justify-center bg-[#f0f0f0]" style={{ paddingTop: pt }}><div className="w-[6px] bg-[#858585]" style={{ height: h }} /></div>
);

const features = [["comment", "(0, 1)", 103, 1], ["dna_flex", "(0, 7461)", 120], ["exon", "(0, 388)", 89], ["gene", "(0, 1216)", 98], ["misc_RNA", "(0, 58)", 115], ["mRNA", "(0, 1846)", 108], ["ncRNA", "(0, 324)", 102], ["source", "(0, 1)", 84, 1], ["tRNA", "(0, 31)", 84]];

const Col = ({ w, tw, t }) => (
  <div className="flex h-full items-center border-r border-[#e2e2e2] pl-[5px]" style={{ width: w }}><Fit w={tw}>{t}</Fit></div>
);

function SequenceView() {
  return (
    <div className="flex w-[1554px] shrink-0 flex-col border-r-2 border-t border-l border-[#828790] bg-[#f0f0f0]">
      <SeqHeader />
      <div className="flex h-[346px]">
        <div className="flex w-[30px] shrink-0 flex-col items-center">
          <Svg w={10} h={12} className="mt-[5px]"><path d="M14 4V1H2l7 7-7 7h12v-3" stroke="#555" strokeWidth="2.200" /></Svg>
          <div className="mt-[20px] flex flex-col gap-2">
            {["plus", "minus", "range", "none", "sel"].map((k) => <MagIcon key={k} kind={k} />)}
          </div>
          <div className="mt-[74px] flex h-[24px] w-[25px] flex-col items-center justify-center rounded-[3px] border border-[#99d1ff] bg-[#cce8ff] text-[8px] leading-[10px] text-[#222]">
            <span>GT↵</span><span>CAT</span>
          </div>
          <div className="mt-px flex h-[24px] w-[25px] items-center justify-center rounded-[3px] border border-[#99d1ff] bg-[#cce8ff]">
            <Svg w={17} h={13} vb="0 0 17 14"><path d="M7 4C6 1 1 1 1 7s5 6 6 3" stroke="#223" strokeWidth="1.200" /><path d="M8 4h5V2l4 3-4 3V6H8z" fill="#2f8a4c" /><path d="M17 9.500h-5v-2L8 10.500l4 3v-2h5z" fill="#c84848" /></Svg>
          </div>
          <Svg w={17} h={18} vb="0 0 17 18" className="mt-[5px]"><path d="M0 4.500h8M4 4.500v8M2 12.500h4" stroke="#223" strokeWidth="1.300" /><path d="M8 2h5V.5L16 3l-3 2.500V4H8z" fill="#b0a83c" /><path d="M8 7h5V5.500L16 8l-3 2.500V9H8z" fill="#4a68b8" /><path d="M8 12h5v-1.500l3 2.500h-8z" fill="#c84848" /><path d="M9.500 13h7L13 17z" fill="#000" /></Svg>
          <Svg w={17} h={17} vb="0 0 17 17" className="mt-[7px]"><path d="M2 4V2h6v2M5 2v8M3.500 10h3" stroke="#a02030" strokeWidth="1.300" /><path d="M7 7V5h6v2M10 5v8M8.500 13h3" stroke="#223" strokeWidth="1.300" /><path d="M9 12h8l-4 4z" fill="#000" /></Svg>
          <Svg w={8} h={10} vb="0 0 8 10" className="mr-[4px] mt-[10px]"><path d="M1.500 1L4 3.500 6.500 1M1.500 6L4 8.500 6.500 6" stroke="#444" strokeWidth="1.300" /></Svg>
        </div>
        <div className="flex flex-1 flex-col">
          <svg width="1521" height="30" className="block">
            <defs><linearGradient id="rl" x2="0" y2="1"><stop offset="0" stopColor="#f0f0f0" /><stop offset=".6" stopColor="#dcdcdc" /><stop offset="1" stopColor="#a2a2a2" /></linearGradient></defs>
            <rect x=".5" y="-.5" width="1521" height="28.500" fill="url(#rl)" stroke="#808080" />
            <path d="M0 11v13h6z" fill="#f4a811" stroke="#b87800" strokeWidth=".7" />
            <Marks first={135.500} step={135.400} last={1490.500} end={1520.500} y={8.500} ty={25.500} />
          </svg>
          <div className="mt-[4px] flex h-[168px]"><Overview /><VThumb h={22} pt={124} /></div>
          <div className="flex h-[26px] items-start justify-between pl-[5px] pr-[28px] pt-[4px]">
            <div className="border-y-[5px] border-r-[8px] border-y-transparent border-r-[#9c9c9c]" />
            <div className="border-y-[5px] border-l-[8px] border-y-transparent border-l-[#9c9c9c]" />
          </div>
          <div className="flex h-[118px]"><Sequence /><VThumb h={22} pt={21} /></div>
        </div>
      </div>
      <div className="h-[3px] shrink-0 border-y border-[#828790]" />
      <div className="flex flex-1 border-b border-[#828790]">
        <div className="flex w-[1531px] flex-col bg-white text-[14px]">
          <div className="relative flex h-[30px] w-full pl-px pt-px">
            <Col w={300} tw={40} t="Name" /><Col w={150} tw={31} t="Type" /><Col w={1079} tw={36} t="Value" />
            <ChevronUp size={12} strokeWidth={1.800} color="#555" className="absolute left-[145px] top-[-3px]" />
          </div>
          {features.map(([n, c, w, g]) => (
            <div key={n} className={"flex h-[24px] items-center pl-[31px] " + (g ? "text-[#8a8a8a]" : "text-black")}>
              <ChevronRight size={14} strokeWidth={2} color="#858585" />
              <div className="ml-[9px]"><Folder /></div>
              <Fit w={w} className="ml-[6px]">{n + "  " + c}</Fit>
            </div>
          ))}
        </div>
        <VThumb h={135} pt={97} />
      </div>
    </div>
  );
}

function Main() {
  return (
    <div className="ml-[6px] flex flex-1 flex-col">
      <div className="mt-px flex h-[28px] items-center bg-[#f9f9f9] pl-[19px] pr-[19px] text-[13px]">
        <DnaIcon />
        <Fit w={162} className="ml-[678px] mr-auto">NC_083295 [NC_083295.gb]</Fit>
        <div className="flex h-[14px] w-[14px] items-center justify-center rounded-[2px] border border-[#c8452c] bg-[#e4714e]"><X size={10} strokeWidth={4} color="#fff" /></div>
      </div>
      <div className="flex h-[635px]">
        <SequenceView />
        <div className="flex w-[31px] flex-col gap-[4px] border-b border-r border-t border-[#6e6e6e] bg-[#a0a0a0] pt-[64px]">
          <SideTab><AcgGlass /></SideTab>
          <SideTab><Svg w={17}><path d="M1 2.500h11l2 2H3z" fill="#18a0e0" stroke="#1880b8" /><path d="M2 7h12l1 2.500H1z" fill="#5ae018" stroke="#3aa010" /><path d="M5 12h11v2.500H7z" fill="#fbd23a" stroke="#c89a10" /></Svg></SideTab>
          <SideTab><Svg w={17}><rect x="1" y="7" width="4" height="8" fill="#f8a8a8" stroke="#d83838" /><rect x="6" y="1.500" width="4" height="13.500" fill="#80b8f0" stroke="#2c74c8" /><rect x="11" y="9" width="4" height="6" fill="#90d890" stroke="#2f9a3c" /></Svg></SideTab>
          <SideTab><Helix /></SideTab>
          <SideTab><Donut s={15} /></SideTab>
        </div>
      </div>
      <div className="mt-[7px]"><DockTitle t="Tasks" w={33} /></div>
      <div className="mt-[2px] flex-1 border border-[#828790] bg-white text-[14px]">
        <div className="flex h-[30px]">
          <Col w={400} tw={68} t="Task name" /><Col w={250} tw={141} t="Task state description" /><Col w={125} tw={88} t="Task progress" />
          <div className="flex items-center pl-[5px]"><Fit w={49}>Actions</Fit></div>
        </div>
      </div>
    </div>
  );
}

/* ---------- taskbar ---------- */
const UIcon = ({ w, h }) => (
  <Svg w={w} h={h} vb="0 0 29 29">
    <defs><linearGradient id="ug" x2="0" y2="1"><stop offset="0" stopColor="#4a6672" /><stop offset="1" stopColor="#022a38" /></linearGradient></defs>
    <rect x=".5" y=".5" width="28" height="28" fill="url(#ug)" stroke="#3c7080" />
    <path d="M8.500 5v12.500a6 5.500 0 0 0 12 0V5" stroke="#e2e4e4" strokeWidth="4.500" />
  </Svg>
);
const apps = [
  { i: <Svg w={31} h={30} vb="0 0 31 30"><rect x="0" y="8" width="20" height="20" rx="2" fill="#6e7476" /><rect x="8" y="0" width="23" height="21" rx="2" fill="#f4f4f4" /><rect x="8" y="8" width="12" height="13" fill="#bcbebe" /></Svg> },
  { i: <Svg w={29} h={29} vb="0 0 29 29"><defs><linearGradient id="ch" x1="1" y1="0" x2="0" y2="1"><stop offset="0" stopColor="#7a88f0" /><stop offset=".5" stopColor="#7558c8" /><stop offset="1" stopColor="#4a52c0" /></linearGradient></defs><path d="M15 1a13.500 13.500 0 1 1-2 27H1l1-8A13.500 13.500 0 0 1 15 1z" fill="url(#ch)" /><rect x="6" y="9" width="11" height="12" rx="2" fill="#fff" /><path d="M18 13l4-4v12l-4-4z" fill="#fff" /></Svg> },
  { dot: 1, i: <Svg w={31} h={28} vb="0 0 31 28"><path d="M0 3a2 2 0 0 1 2-2h8l4 4H0z" fill="#e0a010" /><rect x="0" y="4" width="31" height="23" rx="2" fill="#ffd04c" /><path d="M5 28v-6a3 3 0 0 1 3-3h15a3 3 0 0 1 3 3v6z" fill="#1480d8" /><path d="M9 22.500h13" stroke="#0a58a0" strokeWidth="2" /></Svg> },
  { i: <Svg w={31} h={30} vb="0 0 31 30"><defs><linearGradient id="ed"><stop offset="0" stopColor="#2a9ae8" /><stop offset=".5" stopColor="#35c4d8" /><stop offset="1" stopColor="#66e06a" /></linearGradient></defs><path d="M1 15a14.500 14.500 0 0 1 29-2c0 5-4 7-8 7-5 0-5-3-4-4 3-5-3-8-8-7z" fill="url(#ed)" /><path d="M1 15c0-9 15-10 17-3-5-2-8 2-7 7s7 9 16 5a14 14 0 0 1-26-9z" fill="#1268c0" /><path d="M11 19c0-6 6-7 7-4-1 4 0 6 5 7-5 5-12 2-12-3z" fill="#123a5c" /></Svg> },
  { i: <Svg w={29} h={30} vb="0 0 29 30"><path d="M8 6V1.500h13V6" stroke="#1a9adc" strokeWidth="2.500" /><path d="M0 6h29v20a3 3 0 0 1-3 3H3a3 3 0 0 1-3-3z" fill="#f2f2f2" /><path d="M9 12h5v5H9z" fill="#f05022" /><path d="M15 12h5v5h-5z" fill="#7fba00" /><path d="M9 18h5v5H9z" fill="#00a4ef" /><path d="M15 18h5v5h-5z" fill="#ffb900" /></Svg> },
  { i: <SiDell size={29} color="#e8eaea" /> },
  { dot: 1, i: <Svg w={30} h={30} vb="0 0 30 30"><circle cx="15" cy="15" r="15" fill="#fff" /><path d="M7.500 8l7.500 8.500L22.500 8M15 16v10" stroke="#e22f2f" strokeWidth="4" /></Svg> },
  { i: <Svg w={28} h={30} vb="0 0 28 30"><path d="M0 0l14 8L28 0v23l-14 7L0 23z" fill="#c42430" /><path d="M6 9l8 5 8-5v10.500L14 23l-8-3.500z" fill="#15262b" /></Svg> },
  { dot: 1, i: <div className="flex h-[27px] w-[27px] items-center justify-center rounded-full bg-[#2a9fd8] pr-px text-white"><FaTelegramPlane size={17} /></div> },
  { i: <Svg w={30} h={30} vb="0 0 30 30"><rect x="10" y="2" width="18" height="19" rx="2" stroke="#0f95d6" strokeWidth="4.500" /><rect x="2.500" y="9" width="18" height="18.500" rx="2" stroke="#f38b00" strokeWidth="4.500" /><path d="M10 13v8h8" stroke="#0f95d6" strokeWidth="4" /></Svg> },
  { i: <Svg w={28} h={25} vb="0 0 28 25"><path d="M9.500 0h9L9 16.500 4.500 25 0 16.500z" fill="#12a052" /><path d="M9.500 0h9L28 16.500h-9.500z" fill="#fbbc05" /><path d="M0 16.500h28L23.500 25h-19z" fill="#2b7bf0" /><path d="M18.500 16.500H28L23.500 25z" fill="#e94235" /><path d="M14 8l4.500 8.500h-9z" fill="#15262b" /></Svg> },
  { i: <Svg w={29} h={20} vb="0 0 29 20"><ellipse cx="16" cy="6" rx="10" ry="5" fill="#0a1830" /><ellipse cx="14.500" cy="10" rx="15" ry="7" transform="rotate(-24 14.500 10)" fill="#1a7cec" /><ellipse cx="15" cy="5" rx="7" ry="3" fill="#0d2444" /><ellipse cx="17" cy="12.500" rx="9" ry="3.800" transform="rotate(-28 17 12.500)" fill="#d8ecff" /></Svg> },
  { i: <SiCloudflare size={31} color="#f48024" /> },
  { i: <Svg w={29} h={22} vb="0 0 29 22"><path d="M4 0h25l-4 22H0z" fill="#4a80dc" /><path d="M9 3.500l7 7-8 7M15 17.500h7" stroke="#fff" strokeWidth="2.600" /></Svg> },
  { i: <Svg w={30} h={30} vb="0 0 30 30"><circle cx="15" cy="15" r="15" fill="#540f52" /><path d="M6.500 15a8.500 9 0 0 1 12-8.300M23.500 15a8.500 9 0 0 1-12 8.300" stroke="#fff" strokeWidth="4" /><path d="M1.500 14.500h10l-5 6zM18.500 15.500h10l-5-6z" fill="#fff" transform="translate(0 -.5)" /></Svg> },
  { i: <div className="flex h-[30px] w-[30px] items-center justify-center rounded-full border border-[#9cc8f8] bg-[#4088d4] pb-1 text-[18px] leading-none text-white"><Fit w={20}>qb</Fit></div> },
  { i: <Svg w={28} h={26} vb="0 0 28 26"><rect x="1" y="1" width="26" height="24" fill="#17131d" /><path d="M26 4H4v10h21V9H12" stroke="#8d5aa4" strokeWidth="3" /><path d="M26 3H4" stroke="#d8a8e0" /><text x="4" y="24" textLength="21" lengthAdjust="spacingAndGlyphs" fontSize="8.500" fontWeight="700" fontFamily="Liberation Sans, sans-serif" fill="#a040b8">FILLM</text></Svg> },
  { dot: 1, i: <Svg w={30} h={30} vb="0 0 30 30"><circle cx="20" cy="9" r="9" fill="#3a78c8" /><path d="M14 4c5-4 9-2 8 2s-5 2-6 7l-4-2z" fill="#c8cc50" /><path d="M3 9a11 11 0 0 0 13 15" stroke="#e43030" strokeWidth="4" /><path d="M6 8a9 9 0 0 0 11 13" stroke="#f4c020" strokeWidth="3.500" /><path d="M9 9a6 6 0 0 0 9 9" stroke="#30b040" strokeWidth="3" /><path d="M9 13l20 4-11 12-1-8z" fill="#3ccf2c" /></Svg> },
  { u: 1, i: <UIcon w={29} h={29} /> },
  { dot: 1, i: <div className="flex h-[24px] w-[24px] items-center justify-center rounded-full bg-[#e4e4e4]"><SiOpenai size={18} color="#222" /></div> },
];

function Taskbar() {
  return (
    <div className="flex h-[60px] shrink-0 border-t border-[#3c474a] bg-linear-to-r from-[#1d2429] via-[#14282c] to-[#1c2328] text-white">
      <div className="w-[145px] pl-[15px] pt-[5px]">
        <Svg w={34} h={38} vb="0 0 34 38">
          <circle cx="13" cy="24" r="13" fill="#f29018" /><path d="M2 31a13 13 0 0 0 18 4" stroke="#e85c1c" strokeWidth="3" />
          <path d="M12 33a4 4 0 0 1 1-7.500 6 6 0 0 1 10-1 4.500 4.500 0 0 1 2 8.500z" fill="#b8d4f4" />
          <circle cx="21.500" cy="12.500" r="10" fill="#fb93a0" />
          <text x="18.500" y="17" fontSize="12.500" fontFamily="Noto Sans, sans-serif" fill="#222">1</text>
        </Svg>
      </div>
      <div className="flex w-[46px] pt-[15px]">
        <Svg w={29} h={29} vb="0 0 29 29"><path d="M0 0h14v14H0z" fill="#6ccdf8" /><path d="M15 0h14v14H15z" fill="#48c0fa" /><path d="M0 15h14v14H0z" fill="#3cb8fa" /><path d="M15 15h14v14H15z" fill="#18a4f8" /></Svg>
      </div>
      <div className="mt-[9px] flex h-[40px] w-[275px] shrink-0 items-center rounded-full border border-[#4c585b] bg-[#384245] pl-[13px] text-[16px] text-[#d8dcdc]">
        <Search size={20} strokeWidth={2.200} color="#f0f0f0" />
        <Fit w={73} className="ml-[12px]">Pesquisar</Fit>
        <Svg w={56} h={32} vb="0 0 56 32" className="ml-[92px]">
          <path d="M5 22C7 9 20 3 30 4s12 4 14 3 10-2 11 3-6 5-10 5c-5 6-20 4-28 5-4 1-3 5-7 7z" fill="#a88468" />
          <path d="M14 7c8-5 18-3 24 1" stroke="#d8bca0" strokeWidth="3" />
          <path d="M4 18c3-4 8-2 8 2l-4 7H1z" fill="#8f7cb8" />
          <path d="M21 17l4 6M38 14l6 6" stroke="#a890c0" strokeWidth="3" />
          <path d="M10 30l1-7 2 7 2-6 1 6M34 30l1-8 2 8 3-8 1 8 3-7 1 7" stroke="#4a9c60" strokeWidth="1.500" />
          <path d="M3 30.500h50" stroke="#7a8ab0" strokeWidth="1.500" strokeDasharray="6 2" />
          <circle cx="4" cy="6" r="1.300" fill="#9ad0f0" /><circle cx="7" cy="1.500" r="1.300" fill="#9ad0f0" />
        </Svg>
      </div>
      <div className="ml-[3px] flex shrink-0">
        {apps.map((a, k) => (
          <div key={k} className="mt-[4px] flex h-[51px] w-[54.970px] shrink-0 flex-col items-center">
            <div className={"flex h-[50px] w-[50px] flex-col items-center rounded-[4px] " + (a.u ? "bg-[#2a3438]" : "")}>
              <div className="flex h-[44px] items-center pt-[6px]">{a.i}</div>
              {a.dot && <div className="mt-px h-[4px] w-2 rounded-full bg-[#959b9d]" />}
              {a.u && <div className="mt-px h-[4px] w-5 rounded-full bg-[#e0a0e4]" />}
            </div>
          </div>
        ))}
      </div>
      <div className="ml-[26px] flex items-center"><ChevronUp size={18} strokeWidth={2.500} color="#f0f0f0" /></div>
      <div className="ml-[20px] mt-[10px] flex w-[36px] flex-col items-center text-[14px] leading-[20px]"><Fit w={29}>POR</Fit><Fit w={34}>PTB2</Fit></div>
      <div className="ml-[20px] flex items-center gap-[9px]">
        <Wifi size={20} strokeWidth={2.300} /><Volume2 size={19} strokeWidth={2} />
        <Svg w={22} h={18} vb="0 0 22 18"><rect x="3.500" y="4" width="15" height="12" rx="3" stroke="#fff" strokeWidth="1.600" /><path d="M7 7.500h9.500v6H6z" fill="#fff" /><path d="M20.500 8.500v4" stroke="#fff" strokeWidth="2" /><path d="M5 0L0 6.500h3L2 11l5-6.500H4.500z" fill="#fff" /></Svg>
      </div>
      <div className="ml-[20px] mt-[9px] flex w-[78px] flex-col items-end text-[14px] leading-[20px]"><Fit w={36}>10:49</Fit><Fit w={77}>12/01/2024</Fit></div>
      <div className="ml-[10px] flex items-center"><FaBell size={19} color="#f0b8f0" /></div>
    </div>
  );
}

export default function App() {
  return (
    <div className="flex h-[1080px] w-[1920px] flex-col overflow-hidden bg-[#f0f0f0] text-black [font-family:'Noto_Sans',sans-serif]">
      <div className="flex h-[29px] shrink-0 items-center bg-linear-to-r from-[#e9f3f8] to-[#eef5f7] pl-[2px] text-[14.500px]">
        <UIcon w={18} h={19} />
        <Fit w={253} className="ml-[8px]">20 unidades de projetos DNA* UGENE</Fit>
        <div className="ml-auto flex items-center pr-[23px]">
          <Minus size={16} strokeWidth={1.500} className="mr-[42px]" />
          <Svg w={13} className="mr-[44px]"><rect x="1" y="4" width="11" height="11" rx="2" stroke="#111" strokeWidth="1.400" /><path d="M4 4V3a2 2 0 0 1 2-2h6a3 3 0 0 1 3 3v6a2 2 0 0 1-2 2" stroke="#111" strokeWidth="1.400" /></Svg>
          <X size={18} strokeWidth={1.600} />
        </div>
      </div>
      <div className="flex h-[26px] shrink-0 items-center gap-[16px] bg-white pl-2 pt-[2px] text-[14.500px]">
        {[["File", 23], ["Actions", 49], ["Settings", 53], ["Tools", 35], ["Window", 56], ["Help", 31]].map(([t, w]) => <Fit key={t} w={w}>{t}</Fit>)}
      </div>
      <Toolbar />
      <div className="flex h-[896px] shrink-0">
        <div className="w-[28px] shrink-0 pl-1 pt-1">
          <div className="flex h-[107px] w-[22px] flex-col items-center justify-end rounded-[2px] border border-black bg-[#cbcbcb] pb-[13px]">
            <span className="rotate-180 text-[12.500px] leading-[18px] [writing-mode:vertical-rl]"><u>1</u>: Project</span>
            <Svg w={16} className="mt-[5px]"><path d="M1 1h13v9H1z" fill="#e0e0e0" stroke="#8c8c8c" /><path d="M3.500 2v7M6.500 2v7M9.500 2v7M12 2v4" stroke="#999" /><path d="M10 4l1.800 3.500 4 .5-3 2.700.7 4.300L10 13l-3.600 2 .7-4.300-3-2.700 4-.5z" fill="#6cc87c" stroke="#3c9a50" strokeWidth=".7" /></Svg>
          </div>
        </div>
        <Project />
        <Main />
      </div>
      <div className="flex h-[29px] shrink-0 items-center border-t border-white pl-1 text-[13px]">
        <div className="flex h-[22px] w-[107px] items-center justify-center gap-[6px] rounded-[2px] border border-black bg-[#cfcfcf]">
          <Svg w={16} h={17}><path d="M2 4l3-3M14 4l-3-3" stroke="#e8a020" strokeWidth="3" strokeLinecap="round" /><circle cx="8" cy="8.500" r="6" fill="#e8f4ff" stroke="#3c80c8" strokeWidth="2" /><path d="M8 5v4l2-2" stroke="#333" /><path d="M4 14l-1.500 1.500M12 14l1.500 1.500" stroke="#777" strokeWidth="1.500" /></Svg>
          <Fit w={50}><u>2</u>: Tasks</Fit>
        </div>
        <div className="ml-[3px] flex h-[22px] w-[107px] items-center justify-center gap-[6px] rounded-[2px] border border-black bg-[#f0f0f0]">
          <Svg w={17} h={15}><path d="M0 3h16v12H0z" fill="#2a6cb0" /><path d="M1.500 2c3-1.500 5-1 6.500.5C9.500 1 11.500.5 14.500 2v10.500c-3-1-5-1-6.500.5-1.500-1.500-3.500-1.500-6.500-.5z" fill="#f0f6fc" stroke="#7a9ab8" strokeWidth=".8" /><path d="M8 2.500V13M3 5h3M3 7h3M3 9h3M10 5h3M10 7h3M10 9h3" stroke="#7a90a8" strokeWidth=".8" /></Svg>
          <Fit w={36}><u>3</u>: Log</Fit>
        </div>
        <Fit w={85} className="ml-auto">No active tasks</Fit>
        <Svg w={14} h={16} className="ml-[8px]"><path d="M5 11C1 8 1 1 8 1s7 7 3 10z" fill="#cfe4f4" stroke="#a0c0d8" /><path d="M5 11h6v3l-2 2H7l-2-2z" fill="#8a8a7a" /></Svg>
        <Svg w={16} h={17} className="ml-[9px] mr-px"><rect x="1" y="2" width="12" height="13" fill="#e4ecf4" stroke="#7a94ac" /><path d="M3 5h5M3 7.500h5M3 10h3" stroke="#8aa0b8" /><path d="M10 4l6 11.500H4.500z" fill="#f8d848" stroke="#b89418" strokeWidth=".7" /><path d="M12 2.500v11M9.500 5L12 2.500" stroke="#111" strokeWidth="2.300" /></Svg>
      </div>
      <Taskbar />
    </div>
  );
}
